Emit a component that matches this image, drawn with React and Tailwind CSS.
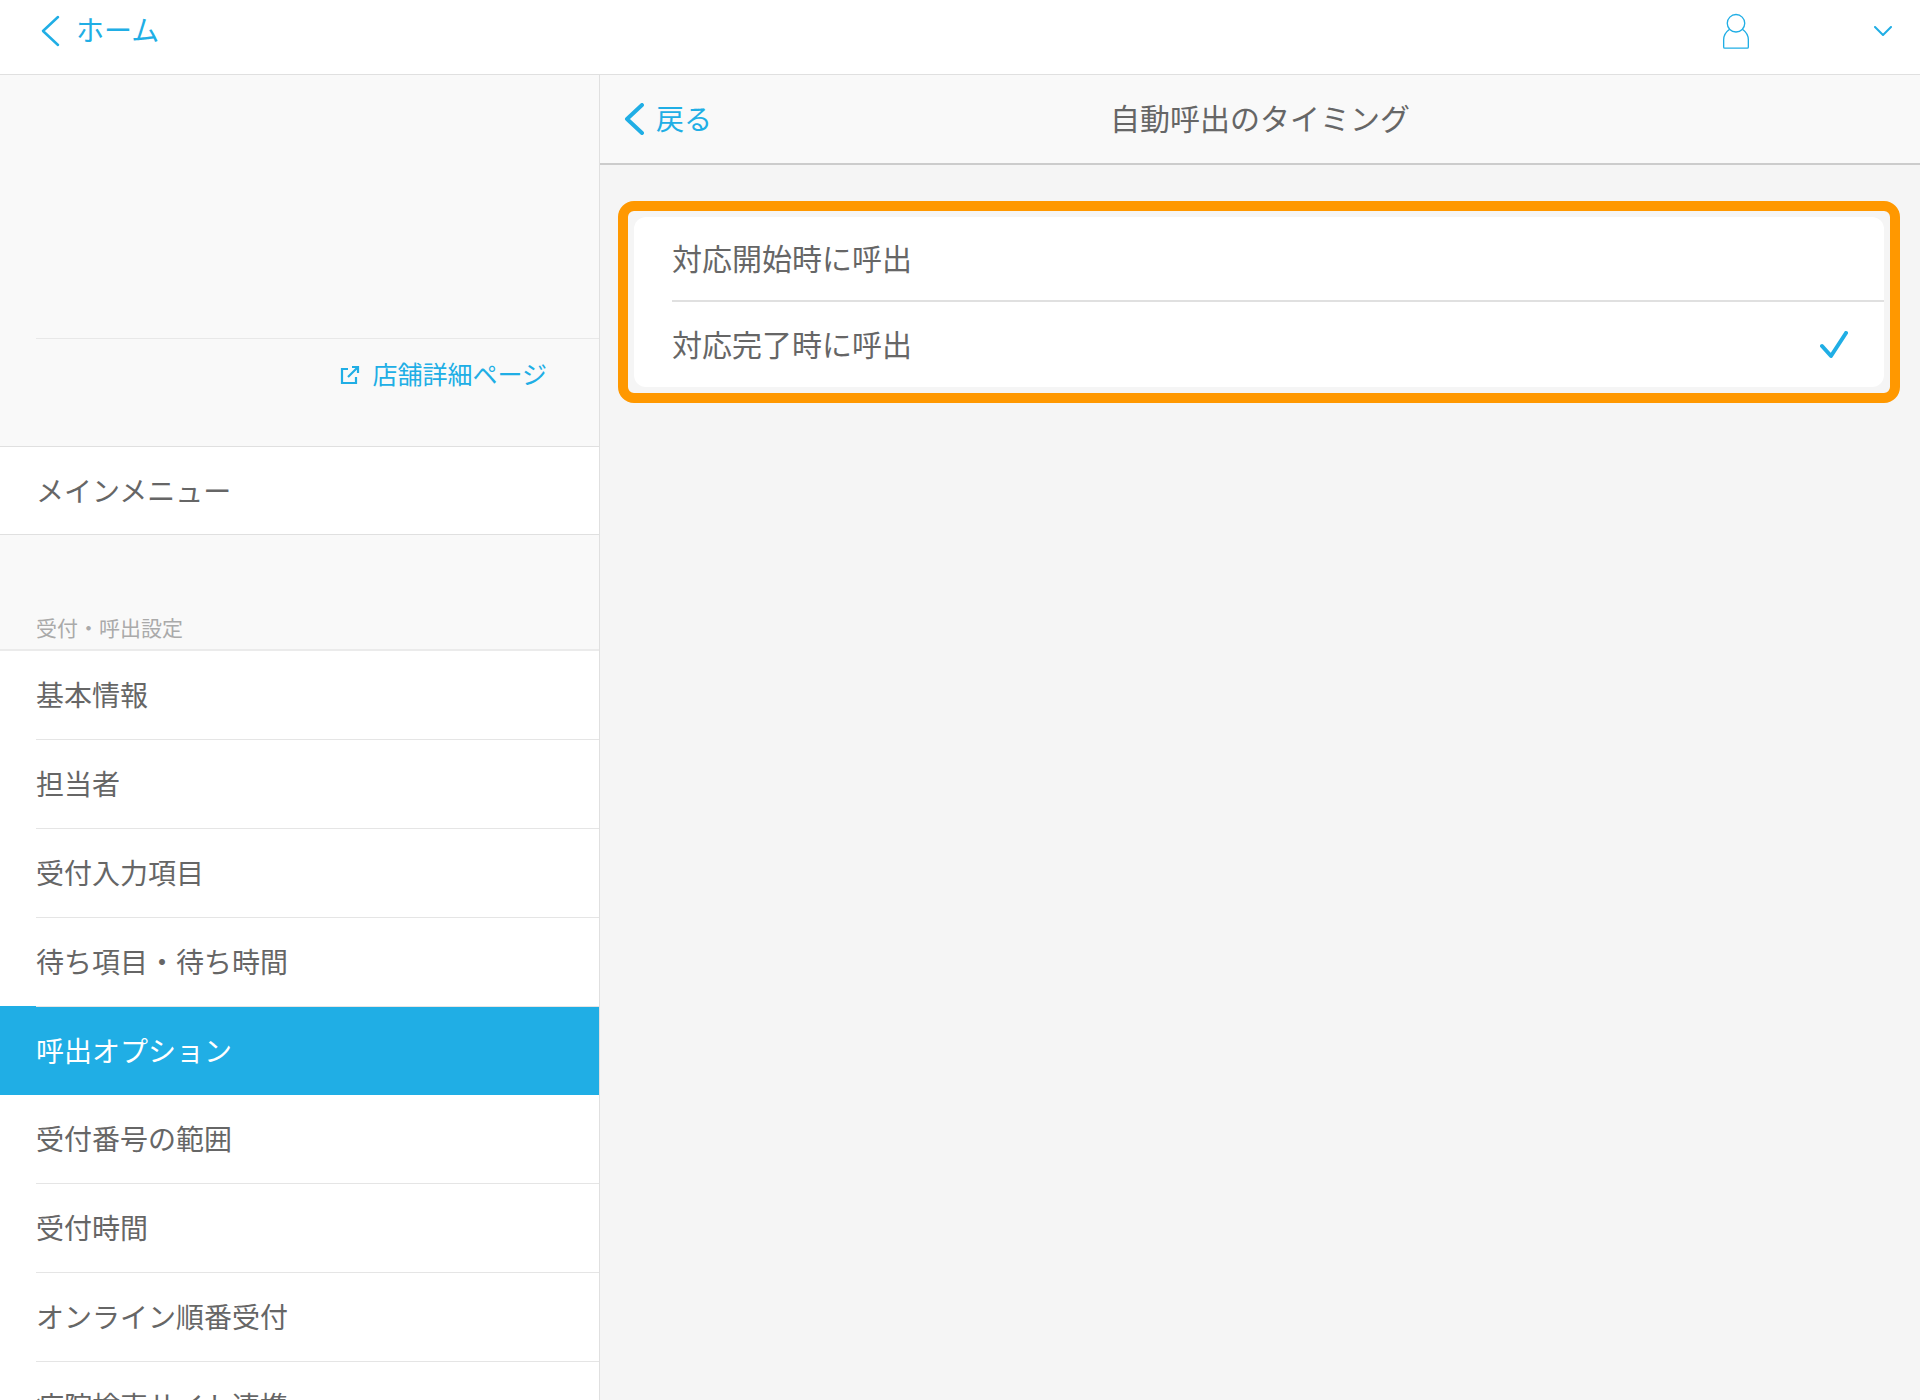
const menuItems = [
  "基本情報",
  "担当者",
  "受付入力項目",
  "待ち項目・待ち時間",
  "呼出オプション",
  "受付番号の範囲",
  "受付時間",
  "オンライン順番受付",
  "病院検索サイト連携",
];

const activeItem = "呼出オプション";

function UserIcon() {
  return (
    <svg viewBox="0 0 26 35" className="w-7 h-9" fill="none" stroke="currentColor" strokeWidth="1.3">
      <circle cx="13" cy="10" r="8.5" />
      <path d="M6.5 16 C3 18.5 1 21 1 26 V33 C1 33.8 1.4 34.2 2 34.2 H24 C24.6 34.2 25 33.8 25 33 V26 C25 21 23 18.5 19.5 16" />
    </svg>
  );
}

function BackChevron({ width }) {
  return (
    <svg viewBox="0 0 20 32" className="w-5 h-8" fill="none" stroke="currentColor" strokeWidth={width} strokeLinecap="round" strokeLinejoin="round">
      <polyline points="18,2 3,16 18,30" />
    </svg>
  );
}

function DownChevron() {
  return (
    <svg viewBox="0 0 18 10" className="w-4.5 h-2.5" fill="none" stroke="currentColor" strokeWidth="2" strokeLinecap="round" strokeLinejoin="round">
      <polyline points="1,1 9,9 17,1" />
    </svg>
  );
}

function CheckMark() {
  return (
    <svg viewBox="0 0 28 28" className="w-7 h-7" fill="none" stroke="currentColor" strokeWidth="4" strokeLinecap="round" strokeLinejoin="round">
      <polyline points="2,15 11,25 26,2" />
    </svg>
  );
}

function OutLinkIcon() {
  return (
    <svg viewBox="0 0 20 20" className="w-5 h-5 mt-2.5" fill="none" stroke="currentColor" strokeWidth="2.2">
      <path d="M8 4 H2 V18 H16 V12" />
      <path d="M8 12 L18 2 M12 2 H18 V8" />
    </svg>
  );
}

export default function App() {
  return (
    <div
      className="h-screen overflow-hidden flex flex-col bg-white text-[#666666]"
      style={{ fontFamily: '"Noto Sans CJK JP", sans-serif' }}
    >
      {/* top bar */}
      <header className="h-[75px] shrink-0 flex items-center justify-between pl-10 pr-7 border-b border-[#e0e0e0] text-[#20aee5]">
        <div className="flex items-center gap-4 pb-3">
          <BackChevron width={2.5} />
          <span className="text-[28px] pb-1">ホーム</span>
        </div>
        <div className="flex items-center gap-31 pb-3">
          <UserIcon />
          <DownChevron />
        </div>
      </header>

      <div className="flex-1 flex min-h-0">
        {/* sidebar */}
        <aside className="w-[600px] shrink-0 bg-[#f9f9f9] border-r border-[#e0e0e0] flex flex-col">
          <div className="h-[264px] shrink-0 pl-9">
            <div className="h-full border-b border-[#e8e8e8]" />
          </div>
          <div className="h-27 shrink-0 flex justify-end pr-13 pt-4 border-b border-[#e0e0e0]">
            <a className="flex items-start gap-3 text-[25px] text-[#20aee5]">
              <OutLinkIcon />
              店舗詳細ページ
            </a>
          </div>
          <div className="h-22 shrink-0 flex items-center pl-9 pb-0.5 bg-white text-[28px] border-b border-[#e0e0e0]">
            メインメニュー
          </div>
          <div className="h-29 shrink-0 flex items-end pl-9 pb-1.5 text-[21px] text-[#aaaaaa] border-b-2 border-[#ebebeb]">
            受付・呼出設定
          </div>
          <nav className="bg-white flex-1">
            {menuItems.map((item, i) =>
              item === activeItem ? (
                <div key={item} className="h-[89px] -mt-px pl-9 pb-0.5 flex items-center bg-[#20aee5] text-white text-[28px]">
                  {item}
                </div>
              ) : (
                <div key={item} className={menuItems[i + 1] === activeItem ? "relative pl-9" : "pl-9"}>
                  <div className="h-[89px] pb-0.5 flex items-center border-b border-[#e5e5e5] text-[28px]">{item}</div>
                </div>
              )
            )}
          </nav>
        </aside>

        {/* content */}
        <main className="flex-1 bg-[#f5f5f5] min-w-0">
          <div className="h-[90px] relative flex items-center justify-center bg-[#f9f9f9] border-b-2 border-[#cccccc]">
            <div className="absolute left-6 flex items-center gap-3 text-[#20aee5]">
              <BackChevron width={4} />
              <span className="text-[28px] pb-0.5">戻る</span>
            </div>
            <h1 className="text-3xl pb-1">自動呼出のタイミング</h1>
          </div>

          <div className="pt-9 pl-4.5 pr-5">
            <div className="border-[10px] border-[#ff9800] rounded-2xl p-1.5 bg-[#f5f5f5]">
              <div className="bg-white rounded-xl pl-9.5">
                <div className="h-[85px] pb-1 flex items-center border-b-2 border-[#e0e0e0] text-3xl">
                  対応開始時に呼出
                </div>
                <div className="h-[85px] pb-1 flex items-center justify-between pr-9 text-3xl">
                  対応完了時に呼出
                  <span className="text-[#20aee5] mt-1">
                    <CheckMark />
                  </span>
                </div>
              </div>
            </div>
          </div>
        </main>
      </div>
    </div>
  );
}
